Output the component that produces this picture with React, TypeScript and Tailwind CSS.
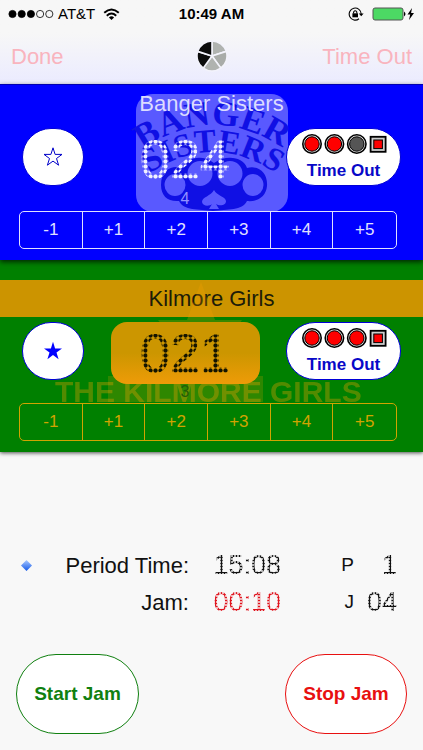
const SANS = "font-['Liberation_Sans',Arial,sans-serif]";

function DotDigits({ value, size, tone }: { value: string; size: "lg" | "sm"; tone: string }) {
  const look =
    size === "lg"
      ? "text-[54px] leading-[54px] bg-[length:5px_5px] bg-position-[3px_2px] bg-[radial-gradient(circle,currentColor_1.7px,transparent_2.5px)] [-webkit-text-stroke:1px_transparent]"
      : "text-[27px] leading-[27px] bg-[length:3px_3px] bg-position-[1px_1px] bg-[radial-gradient(circle,currentColor_1px,transparent_1.6px)]";
  return (
    <span className={`${tone} ${look} inline-block bg-clip-text`}>
      <span className="[-webkit-text-fill-color:transparent]">{value}</span>
    </span>
  );
}

function Star({ filled }: { filled: boolean }) {
  return (
    <svg width="20" height="20" viewBox="0 0 20 20" aria-hidden="true">
      <path
        d="M10 0.8 12.1 7.4H19L13.5 11.5 15.6 18.2 10 14.1 4.4 18.2 6.5 11.5 1 7.4H7.9Z"
        fill={filled ? "#0000ff" : "none"}
        stroke="#0000c8"
        strokeWidth={filled ? 0 : 1}
      />
    </svg>
  );
}

function Lamps({ used }: { used: boolean[] }) {
  return (
    <svg className="shrink-0" width="86" height="22" viewBox="0 0 86 22" aria-hidden="true">
      {used.map((u, i) => (
        <g key={i}>
          <circle cx={11 + i * 22.4} cy="11" r="9.2" fill="#e6e6e6" stroke="#000" strokeWidth="1.6" />
          <circle cx={11 + i * 22.4} cy="11" r="7.2" fill={u ? "#555" : "#f00"} stroke="#000" strokeWidth="1" />
        </g>
      ))}
      <rect x="69.6" y="3.8" width="15" height="15" fill="#ccc" stroke="#000" strokeWidth="1.8" />
      <rect x="72.8" y="7" width="8.6" height="8.6" fill="#f00" stroke="#000" strokeWidth="1" />
    </svg>
  );
}

function TeamControls({ score, box, digits, filled, used }: { score: string; box: string; digits: string; filled: boolean; used: boolean[] }) {
  return (
    <div className="relative flex items-start justify-between px-[22px]">
      <button aria-label="Lead jammer" className="flex h-[58px] w-[62px] items-center justify-center rounded-[29px] border border-[#0000d8] bg-white">
        <Star filled={filled} />
      </button>
      <div className={`flex h-[62px] w-[149px] items-center justify-center rounded-2xl ${box}`}>
        <DotDigits value={score} size="lg" tone={digits} />
      </div>
      <button className="flex h-[58px] w-[115px] flex-col items-center rounded-[29px] border border-[#0000d8] bg-white pt-1 text-[17px] leading-8 font-bold text-[#0808c8]">
        <Lamps used={used} />
        Time Out
      </button>
    </div>
  );
}

function PointsBar({ tone }: { tone: string }) {
  return (
    <div className={`relative mr-[26px] ml-[19px] grid h-[38px] grid-cols-6 divide-x-1 divide-current rounded-[5px] border border-current text-[17px] ${tone}`}>
      {["-1", "+1", "+2", "+3", "+4", "+5"].map((p) => (
        <button key={p}>{p}</button>
      ))}
    </div>
  );
}

function BangerLogo() {
  return (
    <svg className="absolute top-[9px] left-[136px] overflow-visible" width="152" height="118" viewBox="0 0 152 118" aria-hidden="true">
      <defs>
        <path id="arc-top" d="M1 60Q76 3 152 58" />
        <path id="arc-low" d="M5 86Q76 30 149 86" />
      </defs>
      <rect width="152" height="118" rx="17" fill="#5959ff" />
      <g fill="#1010e4" fontFamily="'Liberation Serif',serif" fontWeight="700" textAnchor="middle">
        <text fontSize="35">
          <textPath href="#arc-top" startOffset="50%">BANGER</textPath>
        </text>
        <text fontSize="33">
          <textPath href="#arc-low" startOffset="50%">SISTERS</textPath>
        </text>
      </g>
      <path
        fillRule="evenodd"
        fill="#1010e4"
        d="M25 91C25 75 37 71 46 74 50 63 67 60 78 69 90 60 108 63 111 74 123 71 132 79 131 92 130 103 121 108 111 107 106 117 92 115 77 117 62 115 48 117 43 107 32 108 25 102 25 91ZM39 80A10.500 11 0 1 0 39 102A10.500 11 0 1 0 39 80ZM64 67A12.500 12.500 0 1 0 64 92A12.500 12.500 0 1 0 64 67ZM94 67A12.500 12.500 0 1 0 94 92A12.500 12.500 0 1 0 94 67ZM117 80A10.500 11 0 1 0 117 102A10.500 11 0 1 0 117 80ZM78 96C75 102 66 103 66 108 67 113 74 112 76 110L73 115H83L80 110C83 112 90 112 90 107 89 102 81 102 78 96Z"
      />
    </svg>
  );
}

function KilmoreLogo() {
  return (
    <svg className="absolute top-[20px] left-[50px]" width="330" height="130" viewBox="0 0 330 130" aria-hidden="true">
      <path d="M151 2 165 40H192L174 65 191 100 151 78 111 100 129 65 108 40H137Z" fill="#ffa500" opacity="0.22" />
      <rect x="58" y="96" width="155" height="26" fill="#ffa500" opacity="0.18" />
      <text x="5" y="122" fontSize="30" fontWeight="700" fill="#ffa500" opacity="0.32" fontFamily="'Liberation Sans',Arial,sans-serif">
        THE KILMORE GIRLS
      </text>
    </svg>
  );
}

function StatusBar() {
  return (
    <div className="flex h-7 items-center px-2 text-[15px] text-black">
      <div className="flex flex-1 items-center gap-1">
        <svg width="46" height="10" viewBox="0 0 46 10" aria-hidden="true">
          {[0, 1, 2, 3, 4].map((i) => (
            <circle key={i} cx={4.5 + i * 9.2} cy="5" r="3.6" fill={i < 3 ? "#000" : "none"} stroke="#000" strokeWidth="0.8" />
          ))}
        </svg>
        <span>AT&amp;T</span>
        <svg className="ml-1" width="17" height="13" viewBox="0 0 18 13" fill="none" stroke="#000" strokeWidth="2" aria-hidden="true">
          <path d="M1.3 4.7Q9-2.3 16.7 4.7M4 7.8Q9 3.3 14 7.8" />
          <path d="M9 12.2 6.3 9.6Q9 7.3 11.7 9.6Z" fill="#000" stroke="none" />
        </svg>
      </div>
      <span className="font-bold">10:49 AM</span>
      <div className="flex flex-1 items-center justify-end gap-2">
        <svg width="16" height="14" viewBox="0 0 16 14" fill="none" stroke="#000" aria-hidden="true">
          <path d="M13.2 7A6 6 0 1 0 11 11.7" strokeWidth="1.1" />
          <path d="M10.8 6.5H15.6L13.2 9.3Z" fill="#000" stroke="none" />
          <rect x="4.4" y="6.3" width="5.6" height="4" fill="#000" stroke="none" />
          <path d="M5.6 6.5V5Q7.2 2.6 8.8 5V6.5" strokeWidth="1.1" />
        </svg>
        <svg width="43" height="14" viewBox="0 0 43 14" aria-hidden="true">
          <rect x="1" y="1" width="30" height="12" rx="2" fill="#4cd964" stroke="#555" strokeWidth="1" />
          <path d="M32 4.5Q35 7 32 9.5Z" fill="#000" />
          <path d="M40 1 35.500 7.6H38.2L37 13 42 6H39.1Z" fill="#000" />
        </svg>
      </div>
    </div>
  );
}

function Pie() {
  const shades = ["#b0b3b0", "#a9aca9", "#b0b3b0", "#0c0c0c", "#0c0c0c"];
  return (
    <svg width="32" height="32" viewBox="-16 -16 32 32" aria-hidden="true">
      {shades.map((c, i) => (
        <path key={i} d="M0 0V-15A15 15 0 0 1 14.27-4.64Z" fill={c} stroke="#f3f3fb" strokeWidth="1.6" transform={`rotate(${i * 72})`} />
      ))}
    </svg>
  );
}

function ClockRow({ label, time, tone, unit, count, marker }: { label: string; time: string; tone: string; unit: string; count: string; marker?: boolean }) {
  return (
    <div className="flex h-[37px] items-center text-[22px] text-[#111]">
      <div className="flex w-[189px] items-center justify-between pl-[21px]">
        {marker ? (
          <svg width="11" height="11" viewBox="0 0 11 11" aria-hidden="true">
            <defs>
              <linearGradient id="gem" x2="0" y2="1">
                <stop stopColor="#a8c8ff" />
                <stop offset="1" stopColor="#1459e8" />
              </linearGradient>
            </defs>
            <path d="M5.500 0 11 5.500 5.500 11 0 5.500Z" fill="url(#gem)" />
          </svg>
        ) : (
          <span />
        )}
        <span>{label}</span>
      </div>
      <div className="flex w-[92px] justify-end">
        <DotDigits value={time} size="sm" tone={tone} />
      </div>
      <div className="flex flex-1 items-center justify-end pr-[26px]">
        <span className="text-[19px]">{unit}</span>
        <div className="flex w-[43px] justify-end">
          <DotDigits value={count} size="sm" tone="text-[#111]" />
        </div>
      </div>
    </div>
  );
}

export default function App() {
  return (
    <main className={`${SANS} flex min-h-screen flex-col bg-[#f8f8f8]`}>
      <header className="h-[84px] bg-linear-to-b from-[#f7f7f7] from-40% to-[#ebebff]">
        <StatusBar />
        <nav className="grid h-14 grid-cols-[1fr_auto_1fr] items-center px-[11px] text-[22px] text-[#f9b4be]">
          <button className="justify-self-start">Done</button>
          <Pie />
          <button className="justify-self-end">Time Out</button>
        </nav>
      </header>

      <section className="relative z-10 flex h-[176px] flex-col border-t border-[#0000b0] bg-[#0000ff] shadow-[0_2px_5px_rgba(0,0,0,0.7)]">
        <BangerLogo />
        <h2 className="relative mt-[5px] mb-[10px] text-center text-[22px] leading-7 text-[#dcdcff]">Banger Sisters</h2>
        <TeamControls score="024" box="" digits="text-[#f2f2ff]" filled={false} used={[false, false, true]} />
        <span className="relative -mt-1 w-[370px] text-center text-base leading-[25px] text-[#9292ff]">4</span>
        <PointsBar tone="text-[#e0e0ff]" />
      </section>

      <section className="relative flex h-[192px] flex-col bg-[#008000] pt-5 shadow-[0_1px_4px_rgba(0,0,0,0.7)]">
        <h2 className="mb-[5px] bg-[#cc9400] text-center text-[22px] leading-[37px] text-[#1c1c08]">Kilmore Girls</h2>
        <KilmoreLogo />
        <TeamControls score="021" box="bg-linear-to-b from-[#cc9600] from-50% to-[#ee9b08]" digits="text-[#141400]" filled used={[false, false, false]} />
        <span className="relative -mt-1 w-[370px] text-center text-base leading-[23px] text-[#245c08]">3</span>
        <PointsBar tone="text-[#d0a400]" />
      </section>

      <section className="mt-[95px]">
        <ClockRow label="Period Time:" time="15:08" tone="text-[#111]" unit="P" count="1" marker />
        <ClockRow label="Jam:" time="00:10" tone="text-[#e0141e]" unit="J" count="04" />
      </section>

      <footer className="mt-auto flex justify-between px-4 pb-4 text-[19px] font-bold">
        <button className="h-20 w-[123px] rounded-[40px] border border-[#108010] bg-white text-[#108010]">Start Jam</button>
        <button className="h-20 w-[122px] rounded-[40px] border border-[#e81010] bg-white text-[#e81010]">Stop Jam</button>
      </footer>
    </main>
  );
}
